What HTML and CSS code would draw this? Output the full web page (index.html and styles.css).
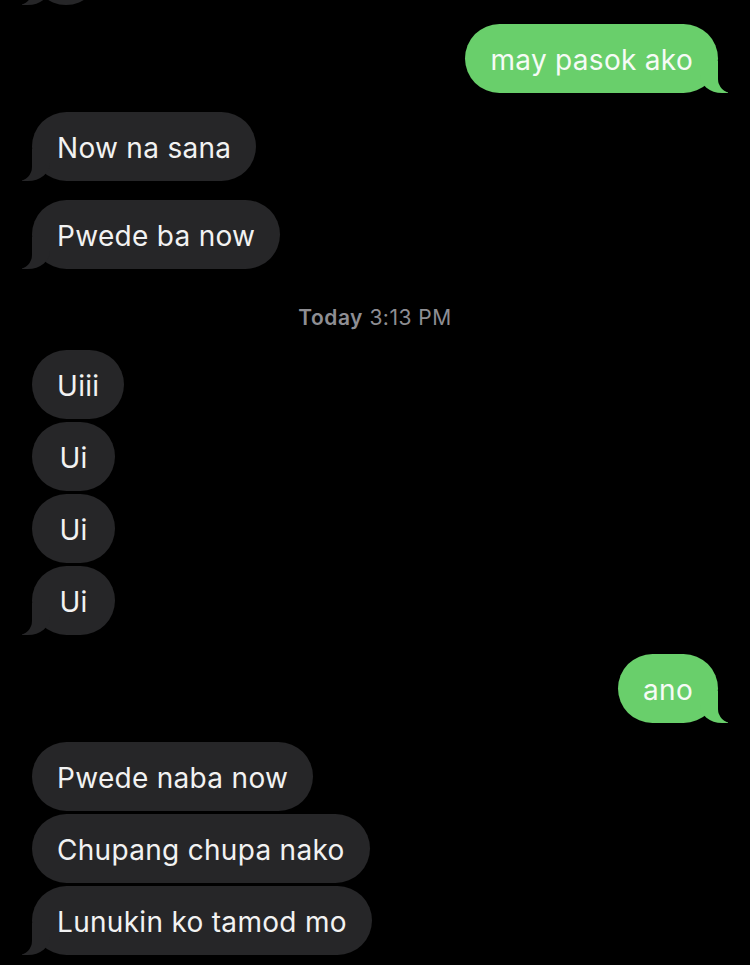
FILE: index.html
```html
<!DOCTYPE html>
<html lang="tl">
<head>
    <meta charset="UTF-8">
    <meta name="viewport" content="width=device-width, initial-scale=1.0">
    <title>Messages</title>
    <link rel="stylesheet" href="styles.css">
</head>
<body>
    <div class="chat">
        <div class="bubble in tail partial"></div>

        <div class="bubble out tail gap">may pasok ako</div>

        <div class="bubble in tail gap">Now na sana</div>
        <div class="bubble in tail gap">Pwede ba now</div>

        <div class="stamp"><strong>Today</strong> 3:13 PM</div>

        <div class="bubble in first">Uiii</div>
        <div class="bubble in">Ui</div>
        <div class="bubble in">Ui</div>
        <div class="bubble in tail">Ui</div>

        <div class="bubble out tail gap">ano</div>

        <div class="bubble in gap">Pwede naba now</div>
        <div class="bubble in">Chupang chupa nako</div>
        <div class="bubble in tail">Lunukin ko tamod mo</div>
    </div>
</body>
</html>
```

FILE: styles.css
```css
body {
    margin: 0;
    background-color: #000;
    font-family: Inter, "Noto Sans", sans-serif;
    overflow: hidden;
}
.chat {
    display: flex;
    flex-direction: column;
    padding: 0 32px;
}
.bubble {
    position: relative;
    box-sizing: border-box;
    min-width: 83px;
    height: 69px;
    line-height: 73px;
    padding: 0 25px;
    border-radius: 35px;
    font-size: 28px;
    letter-spacing: 0.3px;
    text-align: center;
    margin-top: 3px;
    white-space: nowrap;
}
.bubble.gap {
    margin-top: 19px;
}
.bubble.first {
    margin-top: 0;
}
.in {
    align-self: flex-start;
    background-color: #262628;
    color: #f2f2f2;
}
.out {
    align-self: flex-end;
    background-color: #69cf6b;
    color: #f6fbf6;
}
.partial {
    width: 68px;
    min-width: 0;
    margin-top: -64px;
}

/* bubble tails */
.tail::before,
.tail::after {
    content: "";
    position: absolute;
    bottom: 0;
    height: 32px;
}
.in.tail::before {
    left: -10px;
    width: 28px;
    background-color: #262628;
    border-bottom-right-radius: 22px 18px;
}
.in.tail::after {
    left: -28px;
    width: 28px;
    background-color: #000;
    border-bottom-right-radius: 14px;
}
.out.tail::before {
    right: -10px;
    width: 28px;
    background-color: #69cf6b;
    border-bottom-left-radius: 22px 18px;
}
.out.tail::after {
    right: -28px;
    width: 28px;
    background-color: #000;
    border-bottom-left-radius: 14px;
}

.stamp {
    text-align: center;
    color: #8e8e93;
    font-size: 21px;
    letter-spacing: 0.5px;
    line-height: 24px;
    padding: 37px 0 20px;
}
.stamp strong {
    font-weight: 600;
}
```
